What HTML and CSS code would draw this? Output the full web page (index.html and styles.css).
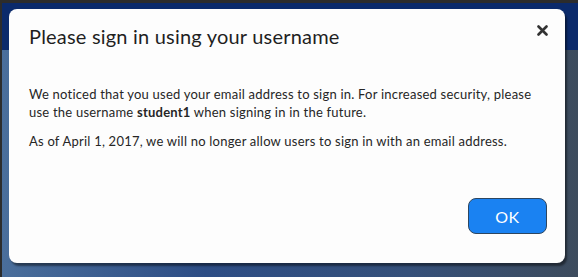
FILE: index.html
```html
<!DOCTYPE html>
<html lang="en">
<head>
  <meta charset="UTF-8" />
  <title>Sign in notice</title>
  <link rel="stylesheet" href="styles.css">
</head>
<body>
  <div class="screen">
    <div class="modal">
      <div class="modal-header">
        <h2 class="modal-title">Please sign in using your username</h2>
        <button class="close" aria-label="Close">
          <svg width="11" height="11" viewBox="0 0 11 11">
            <path d="M1.5 1.5 L9.5 9.5 M9.5 1.5 L1.5 9.5" stroke="#333" stroke-width="2.6" stroke-linecap="round"/>
          </svg>
        </button>
      </div>
      <div class="modal-body">
        <p>We noticed that you used your email address to sign in. For increased security, please<br>use the username <strong>student1</strong> when signing in in the future.</p>
        <p>As of April 1, 2017, we will no longer allow users to sign in with an email address.</p>
      </div>
      <div class="modal-footer">
        <button class="ok">OK</button>
      </div>
    </div>
  </div>
</body>
</html>
```

FILE: styles.css
```css
html, body {
  margin: 0;
  padding: 0;
  background: #2c2c2c;
}
.screen {
  width: 573px;
  height: 272px;
  border-style: solid;
  border-color: #2c2c2c;
  border-width: 3px 3px 2px 2px;
  background:
    linear-gradient(180deg, #0b2a6b 0, #0b2a6b 47px, transparent 47px),
    linear-gradient(90deg, #4a6e9b 0%, #2d4d85 35%, #35507a 70%, #3d4b5c 100%);
  padding: 6px 0 0 7px;
  box-sizing: content-box;
  font-family: Lato, "Open Sans", sans-serif;
  color: #222;
}
.modal {
  width: 556px;
  height: 254px;
  background: #fdfdfd;
  border-radius: 8px;
  box-shadow: 2px 3px 2px rgba(0, 0, 0, 0.45);
  display: flex;
  flex-direction: column;
  box-sizing: border-box;
  padding: 0 18px 29px 20px;
}
.modal-header {
  display: flex;
  justify-content: space-between;
  align-items: flex-start;
  padding-top: 15px;
}
.modal-title {
  margin: 0;
  font-size: 20px;
  font-weight: 400;
  line-height: 24px;
  letter-spacing: 0.2px;
  color: #1f1f1f;
}
.close {
  background: none;
  border: none;
  padding: 0;
  margin: 1px -1px 0 0;
  width: 11px;
  height: 11px;
  display: flex;
}
.modal-body {
  padding-top: 37px;
  font-size: 13px;
  line-height: 18px;
  letter-spacing: 0.22px;
  color: #262626;
}
.modal-body p {
  margin: 0 0 11px 0;
}
.modal-body strong {
  font-weight: 700;
}
.modal-footer {
  margin-top: auto;
  display: flex;
  justify-content: flex-end;
}
.ok {
  width: 79px;
  height: 36px;
  background: #1a82f2;
  color: #fff;
  border: 1px solid #2d4660;
  border-radius: 8px;
  font-family: Lato, "Open Sans", sans-serif;
  font-size: 16px;
  letter-spacing: 0.5px;
  padding: 0;
}
```
